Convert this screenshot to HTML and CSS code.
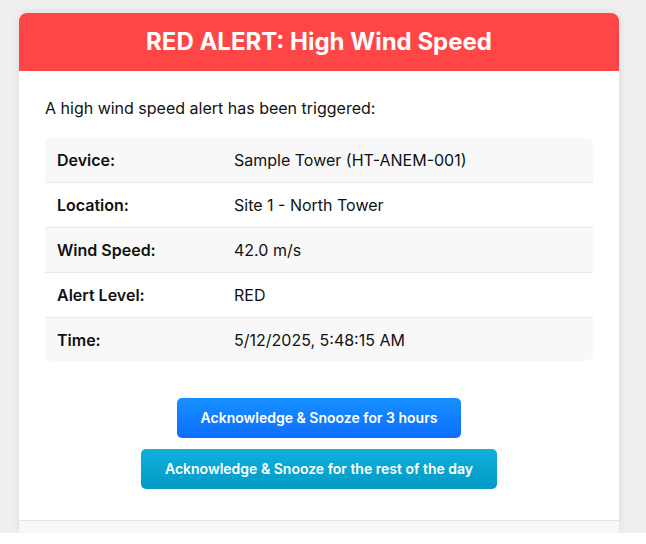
FILE: index.html
```html
<!DOCTYPE html>
<html lang="en">
<head>
<meta charset="utf-8">
<title>RED ALERT: High Wind Speed</title>
<link rel="stylesheet" href="styles.css">
</head>
<body>
<div class="page">
  <div class="card">
    <div class="header">
      <h1 class="title">RED ALERT: High Wind Speed</h1>
    </div>
    <div class="content">
      <p class="intro">A high wind speed alert has been triggered:</p>
      <div class="details">
        <div class="row">
          <div class="label">Device:</div>
          <div class="value">Sample Tower (HT-ANEM-001)</div>
        </div>
        <div class="row">
          <div class="label">Location:</div>
          <div class="value">Site 1 - North Tower</div>
        </div>
        <div class="row">
          <div class="label">Wind Speed:</div>
          <div class="value">42.0 m/s</div>
        </div>
        <div class="row">
          <div class="label">Alert Level:</div>
          <div class="value">RED</div>
        </div>
        <div class="row">
          <div class="label">Time:</div>
          <div class="value">5/12/2025, 5:48:15 AM</div>
        </div>
      </div>
      <div class="actions">
        <a class="btn btn-primary" href="#">Acknowledge &amp; Snooze for 3 hours</a>
        <a class="btn btn-info" href="#">Acknowledge &amp; Snooze for the rest of the day</a>
      </div>
    </div>
    <div class="footer"></div>
  </div>
</div>
</body>
</html>
```

FILE: styles.css
```css
html {
  background: #ffffff;
}
body {
  margin: 0;
  background: #efefef;
  font-family: Inter, "Liberation Sans", sans-serif;
  color: #111;
  height: 533px;
  overflow: hidden;
}
.page {
  padding: 13px 0 0 19px;
}
.card {
  width: 600px;
  background: #ffffff;
  border-radius: 8px 8px 0 0;
  box-shadow: 0 0 10px rgba(0, 0, 0, 0.08);
  overflow: hidden;
}
.header {
  background: #ff4646;
  height: 58px;
  display: flex;
  align-items: center;
  justify-content: center;
}
.title {
  margin: 0;
  color: #ffffff;
  font-size: 24px;
  font-weight: 700;
  line-height: 1;
}
.content {
  padding: 25px 26px 31px;
}
.intro {
  margin: 0 0 18px;
  font-size: 16px;
  line-height: 24px;
  padding-left: 0;
}
.details {
  background: #f8f8f8;
  border-radius: 6px;
  overflow: hidden;
}
.row {
  display: grid;
  grid-template-columns: 177px 1fr;
  height: 44px;
  align-items: center;
  border-bottom: 1px solid #e8e8e8;
  font-size: 16px;
}
.row:nth-child(even) {
  background: #ffffff;
}
.row:last-child {
  border-bottom: none;
  height: 43px;
}
.label {
  padding-left: 12px;
  font-weight: 600;
}
.value {
  padding-left: 12px;
}
.actions {
  display: flex;
  flex-direction: column;
  align-items: center;
  gap: 11px;
  margin-top: 37px;
}
.btn {
  display: block;
  height: 40px;
  line-height: 40px;
  padding: 0 24px;
  border-radius: 5px;
  color: #ffffff;
  font-size: 14px;
  font-weight: 600;
  text-decoration: none;
}
.btn-primary {
  background: linear-gradient(#1690ff, #0d6efd);
}
.btn-info {
  background: linear-gradient(#10b0db, #0399c6);
}
.footer {
  height: 13px;
  background: #f8f8f8;
  border-top: 1px solid #e6e6e6;
}
```
